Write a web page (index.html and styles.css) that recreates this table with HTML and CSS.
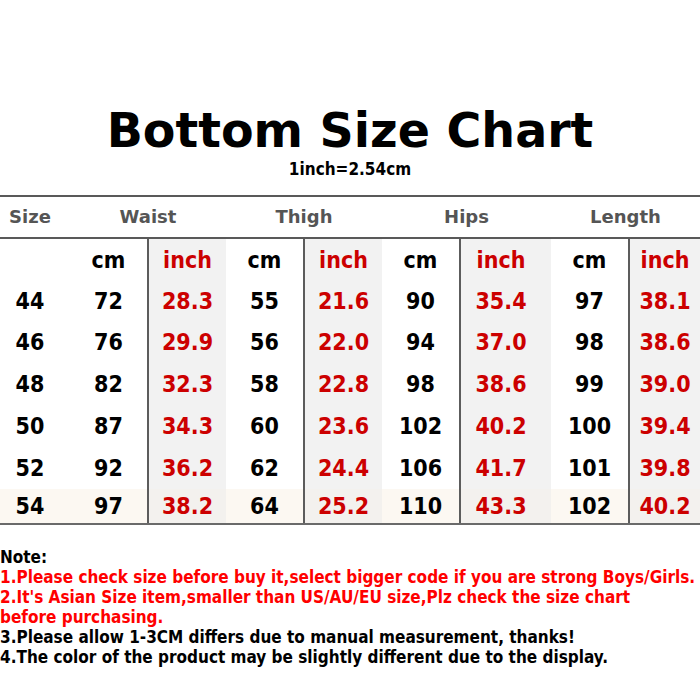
FILE: index.html
```html
<!DOCTYPE html>
<html>
<head>
<meta charset="utf-8">
<link rel="stylesheet" href="styles.css">
</head>
<body>
<div class="page">
  <h1 class="title">Bottom Size Chart</h1>
  <div class="subtitle">1inch=2.54cm</div>

  <div class="thead">
    <div class="th">Size</div>
    <div class="th span2">Waist</div>
    <div class="th span2">Thigh</div>
    <div class="th span2">Hips</div>
    <div class="th span2">Length</div>
  </div>

  <div class="tbody">
    <div class="td"></div><div class="td">cm</div><div class="td in">inch</div><div class="td">cm</div><div class="td in">inch</div><div class="td">cm</div><div class="td in pr">inch</div><div class="td">cm</div><div class="td in">inch</div>

    <div class="td sz">44</div><div class="td">72</div><div class="td in">28.3</div><div class="td">55</div><div class="td in">21.6</div><div class="td">90</div><div class="td in pr">35.4</div><div class="td">97</div><div class="td in">38.1</div>

    <div class="td sz">46</div><div class="td">76</div><div class="td in">29.9</div><div class="td">56</div><div class="td in">22.0</div><div class="td">94</div><div class="td in pr">37.0</div><div class="td">98</div><div class="td in">38.6</div>

    <div class="td sz">48</div><div class="td">82</div><div class="td in">32.3</div><div class="td">58</div><div class="td in">22.8</div><div class="td">98</div><div class="td in pr">38.6</div><div class="td">99</div><div class="td in">39.0</div>

    <div class="td sz">50</div><div class="td">87</div><div class="td in">34.3</div><div class="td">60</div><div class="td in">23.6</div><div class="td">102</div><div class="td in pr">40.2</div><div class="td">100</div><div class="td in">39.4</div>

    <div class="td sz">52</div><div class="td">92</div><div class="td in">36.2</div><div class="td">62</div><div class="td in">24.4</div><div class="td">106</div><div class="td in pr">41.7</div><div class="td">101</div><div class="td in">39.8</div>

    <div class="td sz last">54</div><div class="td last">97</div><div class="td in last">38.2</div><div class="td last">64</div><div class="td in last">25.2</div><div class="td last">110</div><div class="td in pr last">43.3</div><div class="td last">102</div><div class="td in last">40.2</div>
  </div>

  <div class="notes">
    <p class="note-head">Note:</p>
    <p class="red">1.Please check size before buy it,select bigger code if you are strong Boys/Girls.</p>
    <p class="red">2.It's Asian Size item,smaller than US/AU/EU size,Plz check the size chart<br>before purchasing.</p>
    <p>3.Please allow 1-3CM differs due to manual measurement, thanks!</p>
    <p>4.The color of the product may be slightly different due to the display.</p>
  </div>
</div>
</body>
</html>
```

FILE: styles.css
```css
html, body {
  margin: 0;
  padding: 0;
  background: #ffffff;
}

.page {
  width: 700px;
  height: 700px;
  overflow: hidden;
  padding-top: 103px;
  box-sizing: border-box;
  color: #000;
}

.title {
  margin: 0;
  font-family: "DejaVu Sans", sans-serif;
  font-weight: bold;
  font-size: 47.5px;
  line-height: 56px;
  text-align: center;
}

.subtitle {
  font-family: "DejaVu Sans Condensed", "DejaVu Sans", sans-serif;
  font-stretch: condensed;
  font-weight: bold;
  font-size: 17px;
  line-height: 20px;
  text-align: center;
  margin-top: 0;
  height: 36px;
}

.thead,
.tbody {
  display: grid;
  grid-template-columns: 70px 77px 79px 77px 79px 77px 92px 77px 72px;
}

.thead {
  border-top: 2px solid #595959;
  border-bottom: 2px solid #595959;
  height: 40px;
  grid-template-rows: 40px;
}

.th {
  display: flex;
  align-items: center;
  justify-content: center;
  font-family: "DejaVu Sans", sans-serif;
  font-weight: bold;
  font-size: 18px;
  color: #555555;
  padding-bottom: 1px;
}

.th:first-child {
  padding-right: 10px;
}

.span2 {
  grid-column: span 2;
}

.tbody {
  grid-template-rows: 41px 41px 42px 42px 42px 42px 34px;
  border-bottom: 2px solid #6a6a6a;
}

.td {
  display: flex;
  align-items: center;
  justify-content: center;
  font-family: "DejaVu Sans Condensed", "DejaVu Sans", sans-serif;
  font-stretch: condensed;
  font-weight: bold;
  font-size: 23px;
  color: #000;
}

.td.sz {
  padding-right: 10px;
}

.td.in {
  background: #f2f2f2;
  border-left: 2px solid #5c5c5c;
  color: #cc0000;
}

.td.pr {
  padding-right: 10px;
}

.td.last {
  background: #fcf8f2;
}

.td.in.last {
  background: #f3f1ee;
}

.notes {
  margin-top: 22px;
  margin-left: 0;
  font-family: "DejaVu Sans Condensed", "DejaVu Sans", sans-serif;
  font-stretch: condensed;
  font-weight: bold;
  font-size: 17px;
  line-height: 20px;
  color: #000;
  white-space: nowrap;
}

.notes p {
  margin: 0;
}

.notes .red {
  color: #ff0000;
}
```
